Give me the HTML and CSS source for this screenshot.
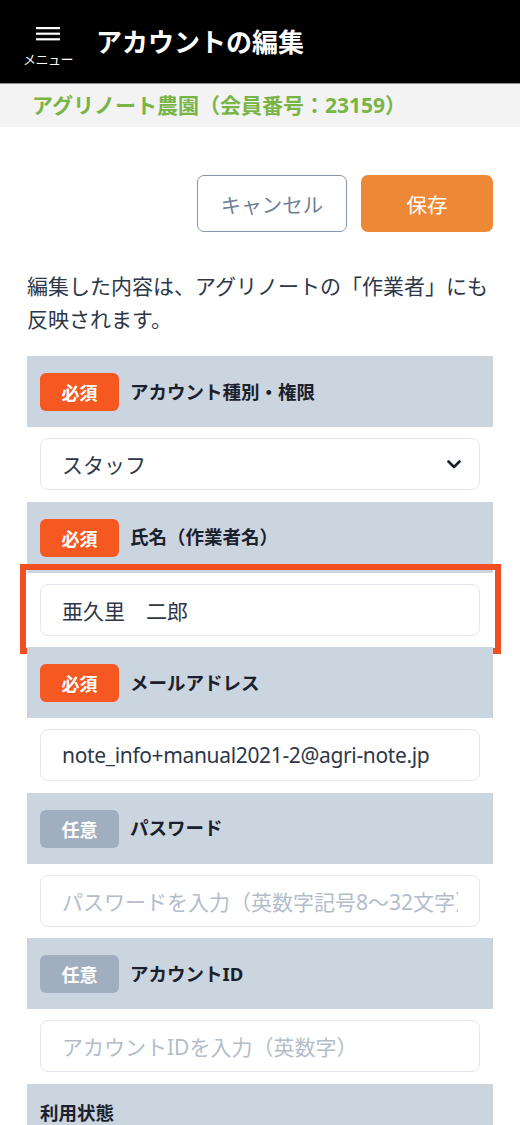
FILE: index.html
```html
<!DOCTYPE html>
<html lang="ja">
<head>
<meta charset="utf-8">
<title>アカウントの編集</title>
<link rel="stylesheet" href="styles.css">
</head>
<body>
<header class="topbar">
  <div class="menu">
    <svg class="burger" width="24" height="14" viewBox="0 0 24 14"><rect x="0" y="0" width="24" height="2.2" fill="#fff"/><rect x="0" y="5.6" width="24" height="2.2" fill="#fff"/><rect x="0" y="11.2" width="24" height="2.2" fill="#fff"/></svg>
    <span class="menu-label">メニュー</span>
  </div>
  <h1 class="title">アカウントの編集</h1>
</header>
<div class="farm">アグリノート農園（会員番号：23159）</div>

<main class="content">
  <div class="actions">
    <button class="btn btn-cancel">キャンセル</button>
    <button class="btn btn-save">保存</button>
  </div>
  <p class="note">編集した内容は、アグリノートの「作業者」にも反映されます。</p>

  <div class="form">
    <section class="field">
      <div class="field-head"><span class="badge req">必須</span><span class="label">アカウント種別・権限</span></div>
      <div class="field-body">
        <div class="input select"><span class="value">スタッフ</span>
          <svg class="chev" width="14" height="9" viewBox="0 0 14 9"><path d="M1.5 1.5 L7 7 L12.5 1.5" fill="none" stroke="#1a202c" stroke-width="2.6" stroke-linecap="round" stroke-linejoin="round"/></svg>
        </div>
      </div>
    </section>
    <section class="field">
      <div class="field-head"><span class="badge req">必須</span><span class="label">氏名（作業者名）</span></div>
      <div class="field-body">
        <div class="input"><span class="value">亜久里　二郎</span></div>
      </div>
      <div class="highlight"></div>
    </section>
    <section class="field">
      <div class="field-head"><span class="badge req">必須</span><span class="label">メールアドレス</span></div>
      <div class="field-body">
        <div class="input"><span class="value latin">note_info+manual2021-2@agri-note.jp</span></div>
      </div>
    </section>
    <section class="field">
      <div class="field-head"><span class="badge opt">任意</span><span class="label">パスワード</span></div>
      <div class="field-body">
        <div class="input placeholder"><span class="value">パスワードを入力（英数字記号8〜32文字）</span></div>
      </div>
    </section>
    <section class="field">
      <div class="field-head"><span class="badge opt">任意</span><span class="label">アカウントID</span></div>
      <div class="field-body">
        <div class="input placeholder"><span class="value">アカウントIDを入力（英数字）</span></div>
      </div>
    </section>
    <section class="field">
      <div class="field-head plain"><span class="label">利用状態</span></div>
    </section>
  </div>
</main>
</body>
</html>
```

FILE: styles.css
```css
* { box-sizing: border-box; }
html, body { margin: 0; padding: 0; background: #fff; }
body {
  font-family: "Noto Sans", "Noto Sans CJK JP", sans-serif;
  color: #2d3748;
  overflow: hidden;
}
.topbar {
  height: 84px;
  background: #000;
  border-bottom: 1px solid #8c8c8c;
  display: flex;
  align-items: center;
  padding: 0 0 0 22px;
}
.menu {
  width: 52px;
  display: flex;
  flex-direction: column;
  align-items: center;
  margin-top: 10px;
}
.burger { display: block; }
.menu-label {
  color: #fff;
  font-size: 13px;
  line-height: 16px;
  margin-top: 10px;
  letter-spacing: -0.5px;
}
.title {
  margin: 0 0 0 22px;
  color: #fff;
  font-size: 26px;
  line-height: 34px;
  font-weight: 700;
}
.farm {
  background: #f3f3f3;
  height: 43px;
  line-height: 43px;
  padding-left: 32px;
  color: #78b446;
  font-weight: 700;
  font-size: 21px;
}
.content { padding: 48px 27px 0; }
.actions {
  display: flex;
  justify-content: flex-end;
  gap: 14px;
}
.btn {
  font-family: inherit;
  height: 57px;
  border-radius: 7px;
  font-size: 20.5px;
  cursor: pointer;
}
.btn-cancel {
  width: 150px;
  background: #fff;
  border: 1.5px solid #8595ab;
  color: #718096;
}
.btn-save {
  width: 132px;
  background: #ed8936;
  border: none;
  color: #fff;
}
.note {
  margin: 38px 0 20px;
  font-size: 21px;
  line-height: 33px;
  color: #2d3748;
}
.form { display: flex; flex-direction: column; }
.field { position: relative; }
.field-head {
  background: #cbd5e0;
  height: 71px;
  display: flex;
  align-items: center;
  padding: 0 13px;
}
.field-head.plain {
  align-items: flex-start;
  padding-top: 15px;
}
.badge {
  width: 79px;
  height: 38px;
  border-radius: 6px;
  color: #fff;
  font-weight: 700;
  font-size: 18px;
  display: flex;
  align-items: center;
  justify-content: center;
  margin-top: 1px;
}
.badge.req { background: #f55820; }
.badge.opt { background: #a0aec0; }
.label {
  margin-left: 11px;
  font-size: 18.5px;
  line-height: 28px;
  font-weight: 700;
  color: #1a202c;
}
.plain .label { margin-left: 0; }
.field-body { padding: 11px 13px 11.5px; }
.input {
  height: 52px;
  border: 1px solid #e2e8f0;
  border-radius: 8px;
  background: #fff;
  display: flex;
  align-items: center;
  padding: 0 21px 0 21px;
  font-size: 21px;
  color: #2d3748;
  white-space: nowrap;
}
.value {
  flex: 1;
  min-width: 0;
  overflow: hidden;
}
.latin { letter-spacing: -0.35px; }
.select { padding-right: 18px; }
.chev { flex: none; }
.placeholder { color: #b3bdca; }
.highlight {
  position: absolute;
  left: -7px;
  right: -8px;
  top: 62px;
  height: 90px;
  border: 6px solid #f04f24;
  pointer-events: none;
}
```
